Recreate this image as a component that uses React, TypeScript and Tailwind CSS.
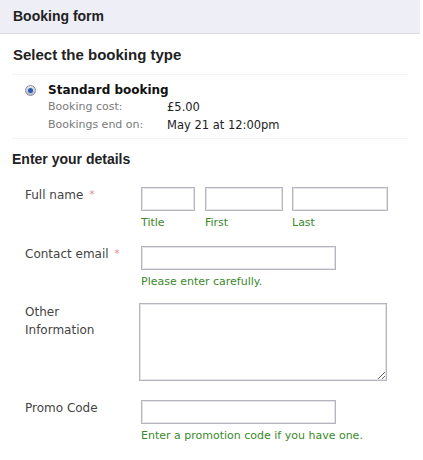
const body = { fontFamily: '"DejaVu Sans", Verdana, sans-serif' }
const head = { fontFamily: '"Liberation Sans", Arial, sans-serif' }

function Field({ className }: { className: string }) {
  return (
    <input
      type="text"
      className={`h-[24px] bg-white border border-[#b4b4bc] shadow-[inset_0_0_0_1px_#e4e4ea] outline-none ${className}`}
    />
  )
}

function Required() {
  return <span className="ml-[6px] text-[10px] text-[#e08a8a] align-top">*</span>
}

export default function App() {
  return (
    <div className="w-[423px] h-[460px] bg-white text-[#333] overflow-hidden" style={body}>
      {/* Header */}
      <div
        className="w-[420px] h-[34px] flex items-center px-[13px] bg-[#eeeef6] border-b border-[#dcdce8] text-[14px] font-bold text-[#222]"
        style={head}
      >
        Booking form
      </div>

      {/* Booking type */}
      <h2 className="mt-[12px] ml-[13px] text-[15px] leading-[18px] font-bold text-[#222]" style={head}>
        Select the booking type
      </h2>
      <div className="mt-[10px] ml-[12px] w-[395px] border-t border-dotted border-[#e6e6ee]" />

      <div className="flex items-start pt-[7px]">
        <div className="ml-[25px] mt-[3px] w-[11px] h-[11px] rounded-full border border-[#8d8d99] bg-gradient-to-b from-[#e8e8ee] to-[#b8b8c4] flex items-center justify-center">
          <div className="w-[5px] h-[5px] rounded-full bg-[#2a5cb4]" />
        </div>
        <div className="ml-[12px]">
          <div className="text-[12px] leading-[16px] font-bold text-[#111]">Standard booking</div>
          <div className="grid grid-cols-[119px_auto] text-[11px] leading-[18px]">
            <span className="text-[#7a7a7a]">Booking cost:</span>
            <span className="text-[#222] text-[11.5px]">£5.00</span>
            <span className="text-[#7a7a7a]">Bookings end on:</span>
            <span className="text-[#222] text-[11.5px]">May 21 at 12:00pm</span>
          </div>
        </div>
      </div>
      <div className="mt-[4px] ml-[12px] w-[395px] border-t border-dotted border-[#e6e6ee]" />

      {/* Details */}
      <h2 className="mt-[11px] ml-[12px] text-[14px] leading-[18px] font-bold text-[#222]" style={head}>
        Enter your details
      </h2>

      <div className="mt-[19px] flex">
        <div className="ml-[25px] w-[116px] text-[12px] leading-[16px] text-[#444]">
          Full name<Required />
        </div>
        <div className="flex">
          <div className="flex flex-col w-[64px]">
            <Field className="w-[54px]" />
            <span className="mt-[4px] text-[11px] leading-[16px] text-[#3a8a2a]">Title</span>
          </div>
          <div className="flex flex-col w-[87px]">
            <Field className="w-[78px]" />
            <span className="mt-[4px] text-[11px] leading-[16px] text-[#3a8a2a]">First</span>
          </div>
          <div className="flex flex-col">
            <Field className="w-[96px]" />
            <span className="mt-[4px] text-[11px] leading-[16px] text-[#3a8a2a]">Last</span>
          </div>
        </div>
      </div>

      <div className="mt-[15px] flex">
        <div className="ml-[25px] w-[116px] text-[12px] leading-[16px] text-[#444]">
          Contact email<Required />
        </div>
        <div className="flex flex-col">
          <Field className="w-[195px]" />
          <span className="mt-[4px] text-[11px] leading-[16px] text-[#3a8a2a]">Please enter carefully.</span>
        </div>
      </div>

      <div className="mt-[13px] flex">
        <div className="ml-[25px] w-[116px] text-[12px] leading-[18px] text-[#444]">
          Other
          <br />
          Information
        </div>
        <textarea className="-ml-[2px] w-[248px] h-[78px] bg-white border border-[#b4b4bc] shadow-[inset_0_0_0_1px_#e4e4ea] outline-none" />
      </div>

      <div className="mt-[19px] flex">
        <div className="ml-[25px] w-[116px] text-[12px] leading-[16px] text-[#444]">Promo Code</div>
        <div className="flex flex-col">
          <Field className="w-[195px]" />
          <span className="mt-[4px] text-[11px] leading-[16px] text-[#3a8a2a]">
            Enter a promotion code if you have one.
          </span>
        </div>
      </div>
    </div>
  )
}
